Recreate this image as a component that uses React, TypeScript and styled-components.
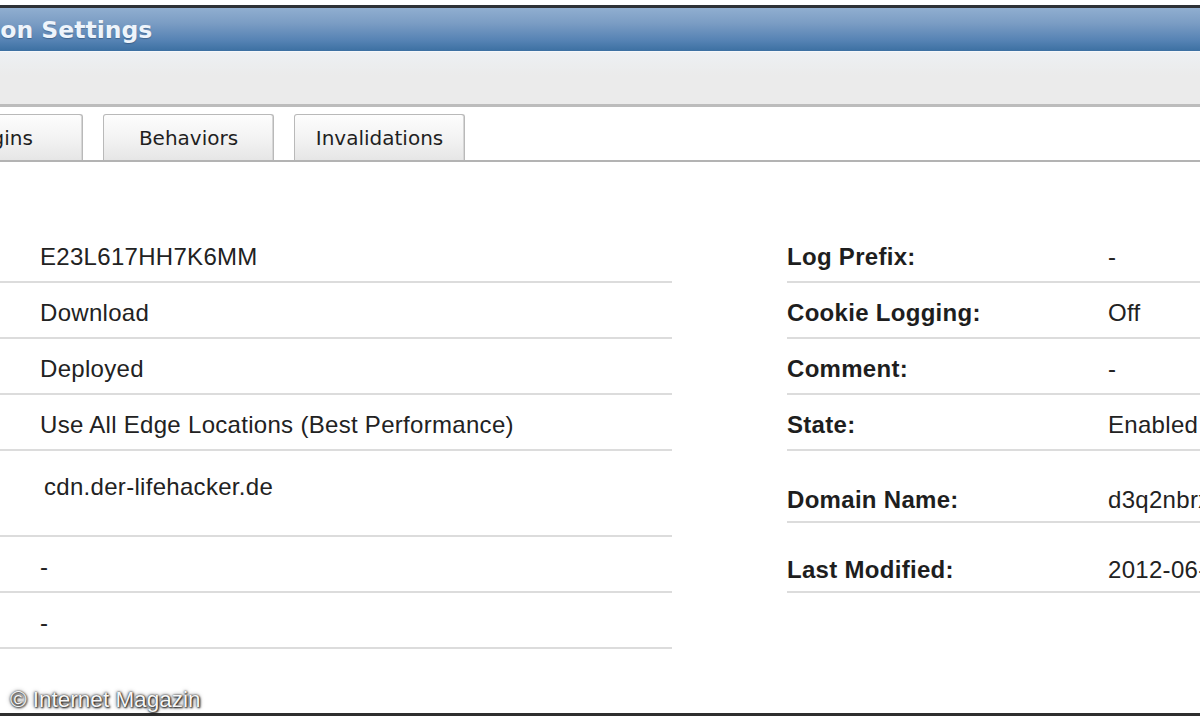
import React from "react";
import styled, { createGlobalStyle } from "styled-components";

const GlobalStyle = createGlobalStyle`
  html, body {
    margin: 0;
    padding: 0;
    background: #ffffff;
    overflow: hidden;
  }
  * { box-sizing: border-box; }
`;

const Page = styled.div`
  position: relative;
  width: 1200px;
  height: 720px;
  overflow: hidden;
  display: flex;
  flex-direction: column;
  padding-top: 5px;
  background: #ffffff;
  font-family: "Liberation Sans", Arial, sans-serif;
  color: #222;
`;

const TitleBar = styled.div`
  height: 46px;
  border-top: 3px solid #2e3136;
  background: linear-gradient(#90aed0 0%, #7b9dc4 35%, #5683b4 75%, #3c70a2 100%);
  display: flex;
  align-items: center;
  overflow: hidden;
  flex-shrink: 0;
`;

const Title = styled.h1`
  margin: 0 0 0 -125px;
  font-family: "DejaVu Sans", Verdana, sans-serif;
  font-weight: 700;
  font-size: 23.5px;
  color: #eef4fb;
  white-space: nowrap;
  text-shadow: 0 1px 1px rgba(20, 40, 70, 0.35);
`;

const Toolbar = styled.div`
  height: 56px;
  flex-shrink: 0;
  border-top: 1px solid #f5f7fa;
  border-bottom: 3px solid #bcbcbc;
  background: linear-gradient(#edf0f3 0%, #ebebeb 45%, #ebebeb 100%);
`;

const TabBar = styled.div`
  flex-shrink: 0;
  display: flex;
  gap: 20px;
  padding-top: 7px;
  margin-left: -88px;
  border-bottom: 2px solid #b3b3b3;
`;

const Tab = styled.div`
  width: 171px;
  height: 46px;
  display: flex;
  align-items: center;
  justify-content: center;
  border: 1px solid #b9b9b9;
  border-bottom: none;
  border-radius: 3px 3px 0 0;
  background: linear-gradient(#fdfdfd 0%, #f2f2f2 55%, #e6e6e6 100%);
  box-shadow: inset -1px 0 0 #d6d6d6;
  font-family: "DejaVu Sans", Verdana, sans-serif;
  font-size: 20px;
  color: #1f1f1f;
  white-space: nowrap;
`;

const Content = styled.div`
  display: flex;
  padding-top: 65px;
`;

const LeftColumn = styled.div`
  width: 672px;
  flex-shrink: 0;
  display: flex;
  flex-direction: column;
`;

const RightColumn = styled.div`
  margin-left: 115px;
  flex: 1;
  min-width: 460px;
  display: flex;
  flex-direction: column;
`;

const ValueRow = styled.div<{ $tall?: boolean }>`
  height: ${(p) => (p.$tall ? 86 : 56)}px;
  display: flex;
  align-items: ${(p) => (p.$tall ? "flex-start" : "center")};
  padding-top: ${(p) => (p.$tall ? 22 : 6)}px;
  padding-left: ${(p) => (p.$tall ? 44 : 40)}px;
  border-bottom: 2px solid #dcdcdc;
  font-size: 24px;
  line-height: 28px;
  letter-spacing: 0.3px;
  white-space: nowrap;
`;

const PairRow = styled.div<{ $height?: number }>`
  height: ${(p) => p.$height ?? 56}px;
  display: grid;
  grid-template-columns: 321px 1fr;
  align-items: ${(p) => (p.$height ? "end" : "center")};
  padding-top: ${(p) => (p.$height ? 0 : 6)}px;
  padding-bottom: ${(p) => (p.$height ? 7 : 0)}px;
  border-bottom: 2px solid #dcdcdc;
  font-size: 24px;
  line-height: 28px;
  letter-spacing: 0.3px;
  white-space: nowrap;
`;

const Label = styled.span`
  font-weight: 700;
  color: #1e1e1e;
`;

const Value = styled.span`
  color: #222;
`;

const BottomRule = styled.div`
  margin-top: auto;
  margin-bottom: 4px;
  height: 3px;
  background: #2f2f2f;
  flex-shrink: 0;
`;

const Watermark = styled.div`
  position: absolute;
  left: 10px;
  bottom: 7px;
  font-family: "Liberation Sans", Arial, sans-serif;
  font-size: 22.5px;
  line-height: 26px;
  color: #f6f6f6;
  text-shadow: 0 0 2px #1e1e1e, 1px 1px 2px #1e1e1e, 0 0 4px rgba(0, 0, 0, 0.6);
  white-space: nowrap;
`;

const leftValues: { value: string; tall?: boolean }[] = [
  { value: "E23L617HH7K6MM" },
  { value: "Download" },
  { value: "Deployed" },
  { value: "Use All Edge Locations (Best Performance)" },
  { value: "cdn.der-lifehacker.de", tall: true },
  { value: "-" },
  { value: "-" },
];

const rightPairs: { label: string; value: string; height?: number }[] = [
  { label: "Log Prefix:", value: "-" },
  { label: "Cookie Logging:", value: "Off" },
  { label: "Comment:", value: "-" },
  { label: "State:", value: "Enabled" },
  { label: "Domain Name:", value: "d3q2nbrxk4mz1.cloudfront.net", height: 72 },
  { label: "Last Modified:", value: "2012-06-14 10:22 UTC+2", height: 70 },
];

const tabs = ["Origins", "Behaviors", "Invalidations"];

export default function App() {
  return (
    <>
      <GlobalStyle />
      <Page>
        <TitleBar>
          <Title>Distribution Settings</Title>
        </TitleBar>
        <Toolbar />
        <TabBar>
          {tabs.map((t) => (
            <Tab key={t}>{t}</Tab>
          ))}
        </TabBar>
        <Content>
          <LeftColumn>
            {leftValues.map((r, i) => (
              <ValueRow key={i} $tall={r.tall}>
                <Value>{r.value}</Value>
              </ValueRow>
            ))}
          </LeftColumn>
          <RightColumn>
            {rightPairs.map((r) => (
              <PairRow key={r.label} $height={r.height}>
                <Label>{r.label}</Label>
                <Value>{r.value}</Value>
              </PairRow>
            ))}
          </RightColumn>
        </Content>
        <BottomRule />
        <Watermark>© Internet Magazin</Watermark>
      </Page>
    </>
  );
}
